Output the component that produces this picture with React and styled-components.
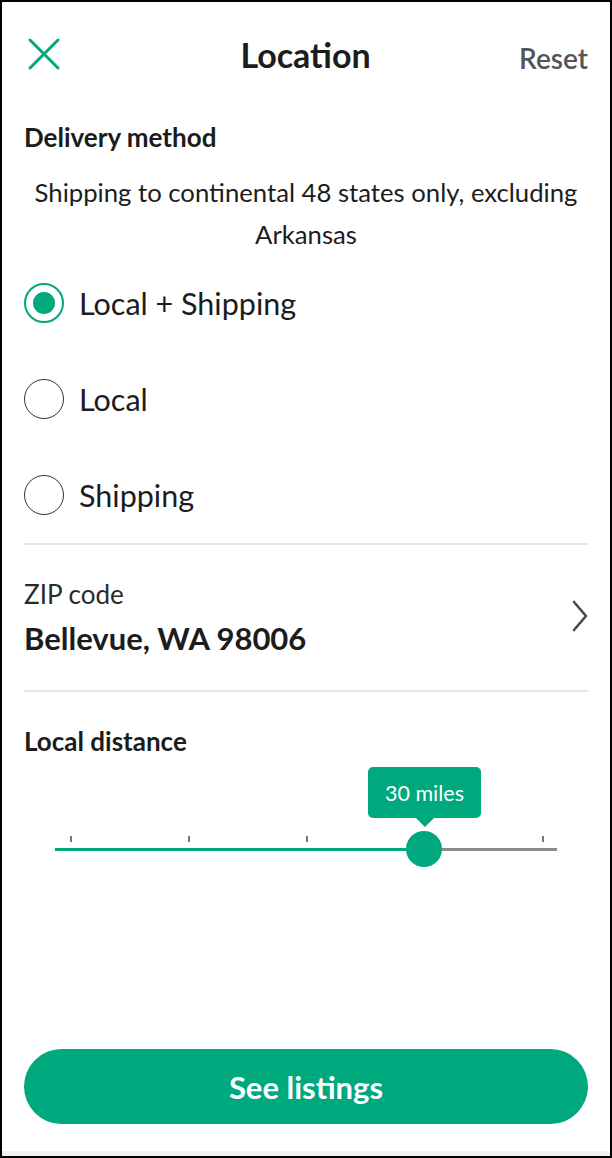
import { useState } from 'react';
import styled, { createGlobalStyle } from 'styled-components';

const GREEN = '#00a87e';

const GlobalStyle = createGlobalStyle`
  * { box-sizing: border-box; }
  body {
    margin: 0;
    font-family: Lato, "Noto Sans", sans-serif;
    color: #1c1c1c;
  }
`

const Frame = styled.div`
  width: 612px;
  height: 1158px;
  border: 2px solid #000;
  background: #fff;
  display: flex;
  flex-direction: column;
`

const Header = styled.header`
  height: 70px;
  margin-top: 20px;
  padding: 0 22px 0 24px;
  display: flex;
  align-items: center;
  justify-content: space-between;
`

const IconButton = styled.button`
  width: 36px;
  height: 36px;
  padding: 0;
  border: 0;
  background: none;
  display: flex;
  align-items: center;
  justify-content: center;
  margin-top: -6px;
`

const Title = styled.h1`
  margin: -5px 0 0 30px;
  font-size: 34px;
  font-weight: 700;
`

const ResetButton = styled.button`
  border: 0;
  background: none;
  padding: 0;
  font-family: inherit;
  font-size: 28px;
  font-weight: 600;
  color: #555;
  margin-top: 1px;
`

const Body = styled.main`
  padding: 0 22px;
  display: flex;
  flex-direction: column;
`

const SectionTitle = styled.h2`
  margin: ${(p) => p.$top || 0}px 0 0;
  font-size: 26px;
  line-height: 30px;
  font-weight: 700;
`

const Note = styled.p`
  margin: 19px 0 0;
  font-size: 25.7px;
  line-height: 42px;
  text-align: center;
`

const RadioList = styled.div`
  display: flex;
  flex-direction: column;
`

const RadioRow = styled.label`
  height: 96px;
  display: flex;
  align-items: center;
  gap: 15px;
  font-size: 30.5px;
  cursor: pointer;
`

const RadioCircle = styled.span`
  width: 40px;
  height: 40px;
  flex: none;
  border-radius: 50%;
  border: ${(p) => (p.$checked ? `2px solid ${GREEN}` : '1.5px solid #333')};
  display: flex;
  align-items: center;
  justify-content: center;

  &::after {
    content: '';
    width: 22px;
    height: 22px;
    border-radius: 50%;
    background: ${GREEN};
    display: ${(p) => (p.$checked ? 'block' : 'none')};
  }
`

const Divider = styled.hr`
  margin: 0;
  border: 0;
  height: 2px;
  background: #e6e6e6;
`

const ZipRow = styled.div`
  padding: 35px 0 34px;
  display: flex;
  align-items: center;
  justify-content: space-between;
`

const ZipLabel = styled.div`
  font-size: 26px;
  line-height: 28px;
  color: #2a2a2a;
`

const ZipValue = styled.div`
  margin-top: 12px;
  font-size: 31px;
  line-height: 36px;
  font-weight: 700;
`

const Chevron = styled.svg`
  margin-right: -1px;
  margin-top: -4px;
`

const Slider = styled.div`
  position: relative;
  height: 110px;
  margin: 4px 31px 0;
`

const Track = styled.div`
  position: absolute;
  left: 0;
  right: 0;
  top: 88px;
  height: 3px;
  background: #8c8c8c;
`

const TrackFill = styled.div`
  height: 100%;
  background: ${GREEN};
`

const Tick = styled.span`
  position: absolute;
  top: 76px;
  width: 1.5px;
  height: 6px;
  background: #777;
`

const Thumb = styled.span`
  position: absolute;
  top: 71px;
  width: 36px;
  height: 36px;
  margin-left: -18px;
  border-radius: 50%;
  background: ${GREEN};
`

const Bubble = styled.div`
  position: absolute;
  top: 7px;
  width: 113px;
  height: 51px;
  margin-left: -56px;
  border-radius: 5px;
  background: ${GREEN};
  color: #fff;
  font-size: 21.5px;
  display: flex;
  align-items: center;
  justify-content: center;

  &::after {
    content: '';
    position: absolute;
    left: 50%;
    bottom: -9px;
    margin-left: -9px;
    border-left: 9px solid transparent;
    border-right: 9px solid transparent;
    border-top: 9px solid ${GREEN};
  }
`

const Footer = styled.footer`
  margin-top: auto;
  padding: 0 22px 27px;
`

const PrimaryButton = styled.button`
  width: 100%;
  height: 75px;
  border: 0;
  border-radius: 38px;
  background: ${GREEN};
  color: #fff;
  font-family: inherit;
  font-size: 31px;
  font-weight: 700;
`

const BottomStrip = styled.div`
  height: 5px;
  background: #f0f0f0;
`

const options = ['Local + Shipping', 'Local', 'Shipping']
const ticks = [0, 1, 2, 3, 4]
const TRACK_W = 502

const App = () => {
  const [method, setMethod] = useState('Local + Shipping')
  const step = 3
  const pos = 15 + step * 118

  return (
    <>
      <GlobalStyle />
      <Frame>
        <Header>
          <IconButton aria-label="Close">
            <svg width="34" height="34" viewBox="0 0 34 34">
              <path d="M3 3 L31 31 M31 3 L3 31" stroke={GREEN} strokeWidth="3" strokeLinecap="round" />
            </svg>
          </IconButton>
          <Title>Location</Title>
          <ResetButton>Reset</ResetButton>
        </Header>

        <Body>
          <SectionTitle $top={30}>Delivery method</SectionTitle>
          <Note>Shipping to continental 48 states only, excluding Arkansas</Note>

          <RadioList>
            {options.map((opt) => (
              <RadioRow key={opt} onClick={() => setMethod(opt)}>
                <RadioCircle $checked={method === opt} />
                {opt}
              </RadioRow>
            ))}
          </RadioList>

          <Divider />
          <ZipRow>
            <div>
              <ZipLabel>ZIP code</ZipLabel>
              <ZipValue>Bellevue, WA 98006</ZipValue>
            </div>
            <Chevron width="18" height="34" viewBox="0 0 18 34">
              <path d="M3 3 L15 17 L3 31" fill="none" stroke="#4a4a4a" strokeWidth="2.6" strokeLinecap="round" strokeLinejoin="round" />
            </Chevron>
          </ZipRow>
          <Divider />

          <SectionTitle $top={34}>Local distance</SectionTitle>
          <Slider>
            {ticks.map((t) => (
              <Tick key={t} style={{ left: 15 + t * 118 }} />
            ))}
            <Track>
              <TrackFill style={{ width: (pos / TRACK_W) * 100 + '%' }} />
            </Track>
            <Bubble style={{ left: pos }}>30 miles</Bubble>
            <Thumb style={{ left: pos }} />
          </Slider>
        </Body>

        <Footer>
          <PrimaryButton>See listings</PrimaryButton>
        </Footer>
        <BottomStrip />
      </Frame>
    </>
  );
};

export default App;
